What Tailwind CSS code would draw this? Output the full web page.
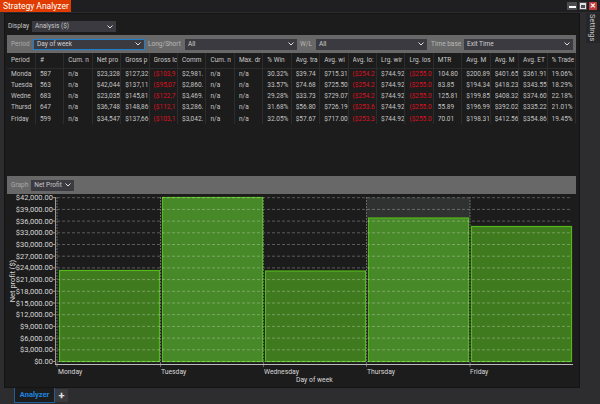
<!DOCTYPE html>
<html lang="en">
<head>
    <meta charset="UTF-8">
    <title>Strategy Analyzer</title>
    <script src="https://cdn.jsdelivr.net/npm/@tailwindcss/browser@4"></script>
</head>
<body class="w-[600px] h-[404px] overflow-hidden bg-[#2d2d30] text-[#c8c8c8] font-['Roboto',sans-serif] text-[6.5px] leading-none">
    <!-- title bar -->
    <div class="h-[12px] bg-[#1f1f21] flex justify-between">
        <div class="w-[71px] bg-[#e03c00] text-white text-[8.500px] flex items-center pl-[3px] whitespace-nowrap">Strategy Analyzer</div>
        <div class="flex gap-[2px] pr-[3px] pt-[2px]">
            <div class="w-[10px] h-[8px] bg-[#4c4c50] flex items-center justify-center"><div class="w-[7px] h-[2px] mt-[2px] bg-white"></div></div>
            <div class="w-[8px] h-[8px] bg-[#4c4c50] flex items-center justify-center"><div class="w-[6px] h-[6px] border border-t-2 border-[#e0e0e0]"></div></div>
            <div class="w-[8px] h-[8px] bg-[#c0393b] text-white text-[7px] font-bold flex items-center justify-center">✕</div>
        </div>
    </div>

    <div class="flex h-[376px]">
        <!-- main panel -->
        <div class="ml-[4px] mt-[1px] w-[576px] h-[375px] bg-[#141414] p-[1px]">
            <div class="h-full bg-[#1c1c1c] px-[2px] flex flex-col">
                <div class="h-[21px] flex items-center pt-[4px] pl-[1px]">
                    <span class="w-[24px] shrink-0">Display</span>
                    <div class="w-[84px] h-[11px] bg-[#3a3a40] flex items-center justify-between px-[3px]">
                        <span>Analysis ($)</span>
                        <svg width="6" height="4" viewBox="0 0 6 4"><path d="M.5.5 3 3 5.500.5" fill="none" stroke="#e0e0e0"/></svg>
                    </div>
                </div>

                <!-- filter toolbar -->
                <div class="h-[18px] w-[569px] shrink-0 bg-[#686868] flex items-center pl-[4px] text-[#d0d0d0]">
                    <span class="w-[22px] shrink-0 text-[#a8a8a8]">Period</span>
                    <div class="w-[112px] shrink-0 h-[11px] bg-[#3a3a40] border border-[#1e7fd0] flex items-center justify-between px-[3px]">
                        <span>Day of week</span>
                        <svg width="6" height="4" viewBox="0 0 6 4"><path d="M.5.5 3 3 5.500.5" fill="none" stroke="#e0e0e0"/></svg>
                    </div>
                    <span class="w-[40px] shrink-0 pl-[3px] text-[#b8b8b8] whitespace-nowrap">Long/Short</span>
                    <div class="w-[112px] shrink-0 h-[11px] bg-[#3a3a40] flex items-center justify-between px-[3px]">
                        <span>All</span>
                        <svg width="6" height="4" viewBox="0 0 6 4"><path d="M.5.5 3 3 5.500.5" fill="none" stroke="#e0e0e0"/></svg>
                    </div>
                    <span class="w-[19px] shrink-0 pl-[3px] text-[#b8b8b8]">W/L</span>
                    <div class="w-[111px] shrink-0 h-[11px] bg-[#3a3a40] flex items-center justify-between px-[3px]">
                        <span>All</span>
                        <svg width="6" height="4" viewBox="0 0 6 4"><path d="M.5.5 3 3 5.500.5" fill="none" stroke="#e0e0e0"/></svg>
                    </div>
                    <span class="w-[37px] shrink-0 pl-[4px] text-[#b8b8b8] whitespace-nowrap">Time base</span>
                    <div class="w-[109px] shrink-0 h-[11px] bg-[#3a3a40] flex items-center justify-between px-[3px]">
                        <span>Exit Time</span>
                        <svg width="6" height="4" viewBox="0 0 6 4"><path d="M.5.5 3 3 5.500.5" fill="none" stroke="#e0e0e0"/></svg>
                    </div>
                </div>

                <!-- stats table -->
                <div class="h-[123px] w-[569px] shrink-0 overflow-hidden">
                    <table id="stats" class="table-fixed w-[569px] border-collapse text-[6.5px]"></table>
                </div>

                <!-- graph toolbar -->
                <div class="h-[18px] w-[569px] shrink-0 bg-[#686868] flex items-center gap-[3px] pl-[4px]">
                    <span class="text-[#a8a8a8]">Graph</span>
                    <div class="w-[43px] h-[11px] bg-[#3a3a40] flex items-center justify-between px-[3px] whitespace-nowrap">
                        <span>Net Profit</span>
                        <svg width="6" height="4" viewBox="0 0 6 4"><path d="M.5.5 3 3 5.500.5" fill="none" stroke="#e0e0e0"/></svg>
                    </div>
                </div>

                <!-- chart, x/y are the data here -->
                <svg id="chart" width="572" height="192" viewBox="0 0 572 192" class="block shrink-0 -ml-[1px]" font-size="7.5" fill="#d8d8d8"></svg>
            </div>
        </div>

        <!-- settings side tab -->
        <div class="ml-[6px] mt-[1px] w-[14px] h-[30px] bg-[#262628] flex items-center justify-center">
            <span class="rotate-90 whitespace-nowrap text-[7.5px]">Settings</span>
        </div>
    </div>

    <!-- bottom tabs -->
    <div class="h-[16px] flex pl-[14px]">
        <div class="w-[41px] h-[15px] bg-[#1c1c1c] border-b border-x border-[#1e5f9a] text-[#1e86e0] font-bold text-[7.5px] flex items-center justify-center">Analyzer</div>
        <div class="w-[13px] h-[13px] mt-[1px] bg-[#3a3a3e] text-[#e0e0e0] text-[11px] font-bold flex items-center justify-center">+</div>
    </div>

    <script>
        const headers = ['Period','#','Cum. n','Net pro','Gross p','Gross lc','Comm','Cum. n','Max. dr','% Win','Avg. tra','Avg. wi','Avg. lo:','Lrg. wir','Lrg. los','MTR','Avg. M','Avg. M','Avg. ET','% Trade'];
        const rows = [
            ['Monda','587','n/a','$23,328','$127,32','($103,9','$2,981.','n/a','n/a','30.32%','$39.74','$715.31','($254.2','$744.92','($255.0','104.80','$200.89','$401.65','$361.91','19.06%'],
            ['Tuesda','563','n/a','$42,044','$137,11','($95,07','$2,860.','n/a','n/a','33.57%','$74.68','$725.50','($254.2','$744.92','($255.0','83.85','$194.34','$418.23','$343.55','18.29%'],
            ['Wedne','683','n/a','$23,035','$145,81','($122,7','$3,469.','n/a','n/a','29.28%','$33.73','$729.07','($254.2','$744.92','($255.0','125.81','$199.85','$408.32','$374.60','22.18%'],
            ['Thursd','647','n/a','$36,748','$148,86','($112,1','$3,286.','n/a','n/a','31.68%','$56.80','$726.19','($253.6','$744.92','($255.0','55.89','$196.99','$392.02','$335.22','21.01%'],
            ['Friday','599','n/a','$34,547','$137,66','($103,1','$3,042.','n/a','n/a','32.05%','$57.67','$717.00','($253.3','$744.92','($255.0','70.01','$198.31','$412.56','$354.86','19.45%']
        ];
        let html = '<tr class="h-[15px] border-b border-[#2c2c2c]">' + headers.map(h => '<th class="font-normal text-left border-r border-[#2c2c2c] pl-[4px] p-0"><div class="overflow-hidden whitespace-nowrap">' + h + '</div></th>').join('') + '</tr>';
        rows.forEach(r => {
            html += '<tr class="h-[11.3px]">' + r.map(c => {
                const red = c.startsWith('(');
                return '<td class="border-r border-[#2c2c2c] pl-[4px] ' + (red ? 'text-[#dc1020]' : 'text-[#c4c4c4]') + '"><div class="overflow-hidden whitespace-nowrap">' + c + '</div></td>';
            }).join('') + '</tr>';
        });
        document.getElementById('stats').innerHTML = html;

        // chart: origin of the svg is x=6,y=194 in the page
        const ox = 6, oy = 194;
        const zero = 361.5 - oy, step = 11.7;
        let svg = '';
        // hover column behind Thursday
        svg += `<rect x="${366.5 - ox}" y="${197.5 - oy}" width="103.500" height="21" fill="#303232"/>`;
        const bars = [[59.5, 270.5, '#3f7a1e'], [162.500, 197.5, '#478828'], [265.5, 271, '#3f7a1e'], [368.5, 218, '#478828'], [471.5, 226.5, '#3f7a1e']];
        bars.forEach(b => {
            svg += `<rect x="${b[0] - ox}" y="${b[1] - oy}" width="100" height="${361.5 - b[1]}" fill="${b[2]}" stroke="#54b71c" stroke-width="1.2"/>`;
        });
        for (let i = 0; i <= 14; i++) {
            const y = zero - i * step;
            const val = (i * 3000).toLocaleString('en-US');
            svg += `<line x1="${57 - ox}" x2="${571 - ox}" y1="${y}" y2="${y}" stroke="#fff" stroke-opacity=".28" stroke-dasharray="3 2"/>`;
            svg += `<line x1="${53 - ox}" x2="${56 - ox}" y1="${y}" y2="${y}" stroke="#999"/>`;
            svg += `<text x="${53 - ox}" y="${y + 2.5}" text-anchor="end">$${val}.00</text>`;
        }
        [57, 160.5, 263.5, 366.5, 470].forEach(x => {
            svg += `<line x1="${x - ox}" x2="${x - ox}" y1="${197 - oy}" y2="${367 - oy}" stroke="#666" stroke-dasharray="2 1"/>`;
        });
        svg += `<line x1="${55.5 - ox}" x2="${55.5 - ox}" y1="${197 - oy}" y2="${364 - oy}" stroke="#999"/>`;
        svg += `<line x1="${55 - ox}" x2="${573 - ox}" y1="${364.5 - oy}" y2="${364.5 - oy}" stroke="#bbb"/>`;
        [['Monday', 58], ['Tuesday', 161], ['Wednesday', 264], ['Thursday', 367], ['Friday', 470]].forEach(l => {
            svg += `<text x="${l[1] - ox}" y="${374 - oy}" font-size="6.800">${l[0]}</text>`;
        });
        svg += `<text x="${296 - ox}" y="${382 - oy}" font-size="6.800">Day of week</text>`;
        svg += `<text transform="translate(${15 - ox} ${281 - oy}) rotate(-90)" text-anchor="middle">Net profit ($)</text>`;
        document.getElementById('chart').innerHTML = svg;
    </script>
</body>
</html>
